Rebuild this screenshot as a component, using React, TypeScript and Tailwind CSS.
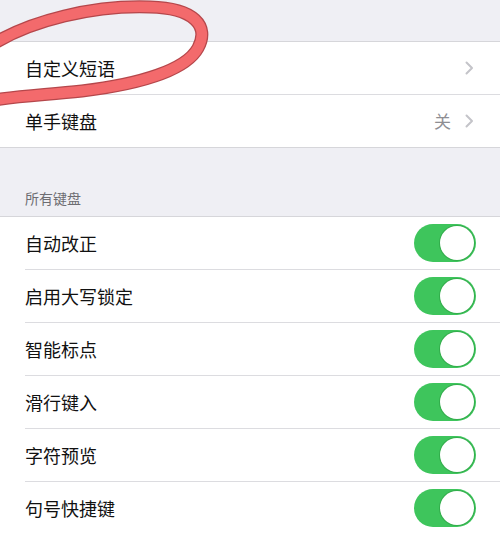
import React from "react";

const font = { fontFamily: '"Noto Sans CJK SC", "Noto Sans", sans-serif' };

function Chevron() {
  return (
    <svg width="9" height="14" viewBox="0 0 9 14" fill="none" className="shrink-0">
      <path d="M1.5 1.5 L7 7 L1.5 12.5" stroke="#c4c4c9" strokeWidth="2" strokeLinecap="round" strokeLinejoin="round" />
    </svg>
  );
}

function Toggle() {
  return (
    <div className="flex h-[38px] w-[62px] shrink-0 items-center justify-end rounded-full bg-[#3ec55c] p-[2px]">
      <div className="h-[34px] w-[34px] rounded-full bg-white shadow-[0_0_0_1px_rgba(40,150,60,0.5)]" />
    </div>
  );
}

function LinkRow({ label, value, last }: { label: string; value?: string; last?: boolean }) {
  return (
    <div className="pl-[25px]">
      <div className={`flex items-center pr-[26px] ${last ? "h-[52px]" : "h-[53px] border-b border-[#dcdce0]"}`}>
        <span className="flex-1 text-[18px] text-[#111]">{label}</span>
        {value && <span className="mr-[14px] text-[17px] text-[#8e8e93]">{value}</span>}
        <Chevron />
      </div>
    </div>
  );
}

function SwitchRow({ label, last }: { label: string; last?: boolean }) {
  return (
    <div className="pl-[25px]">
      <div className={`flex items-center pr-[24px] ${last ? "h-[52px]" : "h-[53px] border-b border-[#dcdce0]"}`}>
        <span className="flex-1 text-[18px] text-[#111]">{label}</span>
        <Toggle />
      </div>
    </div>
  );
}

export default function App() {
  const toggles = ["自动改正", "启用大写锁定", "智能标点", "滑行键入", "字符预览", "句号快捷键"];

  return (
    <div className="relative h-[533px] w-[500px] overflow-hidden bg-[#efeff4]" style={font}>
      <div className="h-[41px]" />
      <div className="border-y border-[#d6d6da] bg-white">
        <LinkRow label="自定义短语" />
        <LinkRow label="单手键盘" value="关" last />
      </div>

      <div className="flex h-[68px] items-end px-[25px] pb-[7px]">
        <span className="text-[14px] text-[#6d6d72]">所有键盘</span>
      </div>

      <div className="border-t border-[#d6d6da] bg-white">
        {toggles.map((t, i) => (
          <SwitchRow key={t} label={t} last={i === toggles.length - 1} />
        ))}
      </div>

      {/* hand-drawn red loop */}
      <svg className="pointer-events-none absolute left-0 top-0" width="220" height="120" viewBox="0 0 220 120" fill="none">
        <path
          d="M-10 46 C 30 20, 95 5, 150 7 C 194 8, 210 26, 198 48 C 186 70, 140 84, 82 91 C 45 95, 15 96, -12 101"
          stroke="#b5474b"
          strokeWidth="13"
          strokeLinecap="round"
        />
        <path
          d="M-10 46 C 30 20, 95 5, 150 7 C 194 8, 210 26, 198 48 C 186 70, 140 84, 82 91 C 45 95, 15 96, -12 101"
          stroke="#f36a6c"
          strokeWidth="10.5"
          strokeLinecap="round"
        />
      </svg>
    </div>
  );
}
